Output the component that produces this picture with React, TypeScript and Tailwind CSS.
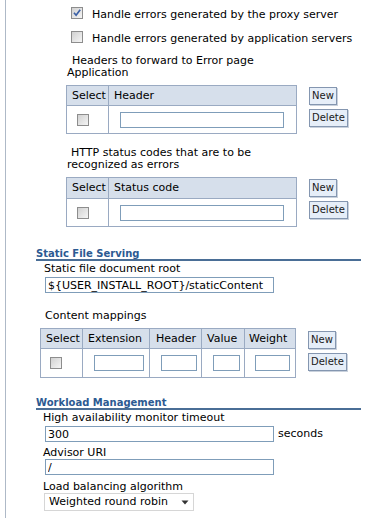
import React from "react"

function Box({ checked = false }: { checked?: boolean }) {
  return (
    <svg width="12" height="12" viewBox="0 0 12 12" className="block shrink-0">
      <defs>
        <linearGradient id="cbfill" x1="0" y1="0" x2="1" y2="1">
          <stop offset="0" stopColor="#cfcfcf" />
          <stop offset="1" stopColor="#f7f7f7" />
        </linearGradient>
      </defs>
      <rect x="0.5" y="0.5" width="11" height="11" fill="url(#cbfill)" stroke="#8d8d8d" />
      {checked && <path d="M3 5.8l2.1 2.4L9.2 2.8" fill="none" stroke="#3b60a6" strokeWidth="1.7" />}
    </svg>
  )
}

function Btn({ children }: { children: React.ReactNode }) {
  return (
    <button className="h-[18px] px-[2px] border border-[#8496b0] bg-[#e6eef8] text-[10px] leading-none text-[#1a1a1a] shadow-[1px_1px_0_#c9d1dc]">
      {children}
    </button>
  )
}

function Field({ w, value = "" }: { w: string; value?: string }) {
  return (
    <input
      readOnly
      value={value}
      className={`${w} h-[16px] border border-[#7f9db9] bg-white px-[2px] text-[11px] leading-none text-black outline-none`}
    />
  )
}

function Heading({ children }: { children: React.ReactNode }) {
  return (
    <div className="ml-[30px] w-[325px] border-b-2 border-[#4a6e96] text-[10px] font-bold leading-[11px] text-[#2c5a92]">
      {children}
    </div>
  )
}

function Buttons({ top }: { top: string }) {
  return (
    <div className={`ml-[12px] flex flex-col items-start gap-[4px] ${top}`}>
      <Btn>New</Btn>
      <Btn>Delete</Btn>
    </div>
  )
}

function SimpleTable({ title, head }: { title: string; head: string }) {
  return (
    <div className="flex items-start">
      <div className="w-[231px] border border-[#9aaac2]">
        <div className={`flex ${head} border-b border-[#9aaac2] bg-[#d6dfeb]`}>
          <div className="flex w-[42px] items-center border-r border-[#9aaac2] pl-[5px]">Select</div>
          <div className="flex flex-1 items-center pl-[5px]">{title}</div>
        </div>
        <div className="flex h-[27px]">
          <div className="flex w-[42px] items-center border-r border-[#9aaac2] pl-[10px]">
            <Box />
          </div>
          <div className="flex flex-1 items-center pl-[11px]">
            <Field w="w-[164px]" />
          </div>
        </div>
      </div>
      <Buttons top="pt-[2px]" />
    </div>
  )
}

export default function App() {
  return (
    <div className="h-[520px] w-[383px] overflow-hidden bg-white font-['DejaVu_Sans',sans-serif] text-[11px] leading-[12px] text-black">
      <div className="ml-[5px] h-[518px] border-l border-[#aeb9c7] pt-[7px]">
        <div className="pl-[60px]">
          <div className="ml-[5px] flex h-[12px] items-start gap-[9px]">
            <Box checked />
            <span className="leading-[16px]">Handle errors generated by the proxy server</span>
          </div>
          <div className="ml-[5px] mt-[12px] flex h-[12px] items-start gap-[9px]">
            <Box />
            <span className="leading-[16px]">Handle errors generated by application servers</span>
          </div>
          <div className="mt-[12px]">
            <div className="pl-[6px]">Headers to forward to Error page</div>
            <div className="pl-[1px]">Application</div>
          </div>
          <div className="mt-[6px]">
            <SimpleTable title="Header" head="h-[20px]" />
          </div>
          <div className="mt-[13px]">
            <div className="pl-[5px]">HTTP status codes that are to be</div>
            <div className="pl-[1px]">recognized as errors</div>
          </div>
          <div className="mt-[6px]">
            <SimpleTable title="Status code" head="h-[21px]" />
          </div>
        </div>

        <div className="mt-[21px]">
          <Heading>Static File Serving</Heading>
          <div className="ml-[38px] mt-[2px]">Static file document root</div>
          <div className="ml-[39px] mt-[2px]">
            <Field w="w-[229px]" value="${USER_INSTALL_ROOT}/staticContent" />
          </div>
          <div className="ml-[39px] mt-[17px]">Content mappings</div>
          <div className="ml-[34px] mt-[6px] flex items-start">
            <div className="w-[256px] border border-[#9aaac2]">
              <div className="flex h-[20px] border-b border-[#9aaac2] bg-[#d6dfeb]">
                <div className="flex w-[42px] items-center border-r border-[#9aaac2] pl-[5px]">Select</div>
                <div className="flex w-[67px] items-center border-r border-[#9aaac2] pl-[5px]">Extension</div>
                <div className="flex w-[52px] items-center border-r border-[#9aaac2] pl-[6px]">Header</div>
                <div className="flex w-[43px] items-center border-r border-[#9aaac2] pl-[5px]">Value</div>
                <div className="flex flex-1 items-center pl-[4px]">Weight</div>
              </div>
              <div className="flex h-[28px]">
                <div className="flex w-[42px] items-center border-r border-[#9aaac2] pl-[9px]">
                  <Box />
                </div>
                <div className="flex w-[67px] items-center border-r border-[#9aaac2] pl-[11px]">
                  <Field w="w-[50px]" />
                </div>
                <div className="flex w-[52px] items-center border-r border-[#9aaac2] pl-[11px]">
                  <Field w="w-[36px]" />
                </div>
                <div className="flex w-[43px] items-center border-r border-[#9aaac2] pl-[11px]">
                  <Field w="w-[27px]" />
                </div>
                <div className="flex flex-1 items-center pl-[10px]">
                  <Field w="w-[35px]" />
                </div>
              </div>
            </div>
            <Buttons top="pt-[3px]" />
          </div>
        </div>

        <div className="mt-[19px]">
          <Heading>Workload Management</Heading>
          <div className="ml-[37px] mt-[2px]">High availability monitor timeout</div>
          <div className="ml-[39px] mt-[2px] flex items-center gap-[4px]">
            <Field w="w-[229px]" value="300" />
            <span>seconds</span>
          </div>
          <div className="ml-[37px] mt-[5px]">Advisor URI</div>
          <div className="ml-[39px]">
            <Field w="w-[229px]" value="/" />
          </div>
          <div className="ml-[37px] mt-[6px]">Load balancing algorithm</div>
          <div className="ml-[38px] flex h-[18px] w-[150px] items-center justify-between border border-[#d6d6d6] bg-white pl-[4px] pr-[4px]">
            <span>Weighted round robin</span>
            <svg width="8" height="5" viewBox="0 0 8 5" className="block">
              <path d="M0.5 0.5h7L4 4.5z" fill="#333" />
            </svg>
          </div>
        </div>
      </div>
    </div>
  )
}
